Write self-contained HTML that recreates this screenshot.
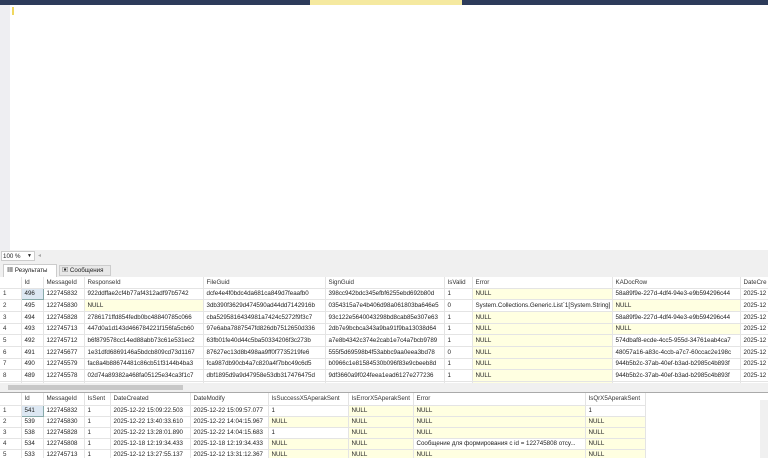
<!DOCTYPE html>
<html><head><meta charset="utf-8"><style>
*{margin:0;padding:0;box-sizing:border-box}
body{width:768px;height:458px;overflow:hidden;background:#fff;font-family:"Liberation Sans","Noto Sans CJK SC",sans-serif;font-size:6.2px;color:#222;position:relative}
.abs{position:absolute;white-space:nowrap}
table{border-collapse:collapse;table-layout:fixed;position:absolute;left:0}
td{border-right:1px solid #e4e4e4;border-bottom:1px solid #e4e4e4;white-space:nowrap;overflow:hidden;padding-left:3px;vertical-align:middle}
tr.h td{background:#fff;color:#333}
td.n{background:#fff;color:#333}
.y{background:#ffffe1}
.sel{background:#dde8f3;border:1px solid #8aa}
</style></head><body>
<div class="abs" style="left:0;top:0;width:768px;height:5px;background:#2d3b5a"></div>
<div class="abs" style="left:310px;top:0;width:152px;height:5px;background:#f5e9a0"></div>
<div class="abs" style="left:0;top:5px;width:10px;height:245px;background:#eeeef2"></div>
<div class="abs" style="left:12px;top:7px;width:2px;height:8px;background:#f0d860"></div>
<div class="abs" style="left:0;top:250px;width:768px;height:12px;background:#f0f0f0"></div>
<div class="abs" style="left:1px;top:251px;width:34px;height:10px;background:#fff;border:1px solid #ccc;line-height:9px;padding-left:1px">100 %<span style="position:absolute;right:2px;font-size:5px">▼</span></div>
<div class="abs" style="left:38px;top:251px;line-height:10px;color:#aaa">◂</div>
<div class="abs" style="left:0;top:262px;width:768px;height:15px;background:#f0f0f0"></div>
<div class="abs" style="left:3px;top:264px;width:54px;height:13px;background:#fff;border:1px solid #ccc;border-bottom:none;line-height:12px;padding-left:3px">▦ Результаты</div>
<div class="abs" style="left:59px;top:265px;width:52px;height:11px;background:#e8e8e8;border:1px solid #ccc;line-height:10px;padding-left:2px">▣ Сообщения</div>
<div class="abs" style="left:0;top:277px;width:768px;height:106px;overflow:hidden">
<table style="top:0;width:790px">
<colgroup><col style="width:21px"><col style="width:22px"><col style="width:41px"><col style="width:119px"><col style="width:122px"><col style="width:119px"><col style="width:28px"><col style="width:140px"><col style="width:128px"><col style="width:50px"></colgroup>
<tr class="h" style="height:11px"><td></td><td>Id</td><td>MessageId</td><td>ResponseId</td><td>FileGuid</td><td>SignGuid</td><td>IsValid</td><td>Error</td><td>KADocRow</td><td>DateCre</td></tr>
<tr style="height:11.7px"><td class="n">1</td><td class="sel">496</td><td>122745832</td><td>922ddffae2cf4b77af4312adf97b5742</td><td>dcfe4e4f0bdc4da681ca849d7feaafb0</td><td>398cc942bdc345efbf6255ebd692b80d</td><td>1</td><td class="y">NULL</td><td>58a89f9e-227d-4df4-94e3-e9b594296c44</td><td>2025-12</td></tr>
<tr style="height:11.7px"><td class="n">2</td><td>495</td><td>122745830</td><td class="y">NULL</td><td>3db390f3629d474590ad44dd7142916b</td><td>0354315a7e4b406d98a061803ba646e5</td><td>0</td><td>System.Collections.Generic.List`1[System.String]</td><td class="y">NULL</td><td>2025-12</td></tr>
<tr style="height:11.7px"><td class="n">3</td><td>494</td><td>122745828</td><td>2786171ffd854fedb0bc48840785c066</td><td>cba5295816434981a7424c5272f9f3c7</td><td>93c122e5640043298bd8cab85e307e63</td><td>1</td><td class="y">NULL</td><td>58a89f9e-227d-4df4-94e3-e9b594296c44</td><td>2025-12</td></tr>
<tr style="height:11.7px"><td class="n">4</td><td>493</td><td>122745713</td><td>447d0a1d143d466784221f156fa5cb60</td><td>97e6aba7887547fd826db7512650d336</td><td>2db7e9bcbca343a9ba91f9ba13038d64</td><td>1</td><td class="y">NULL</td><td class="y">NULL</td><td>2025-12</td></tr>
<tr style="height:11.7px"><td class="n">5</td><td>492</td><td>122745712</td><td>b6f879578cc14ed88abb73c61e531ec2</td><td>63fb01fe40d44c5ba50334206f3c273b</td><td>a7e8b4342c374e2cab1e7c4a7bcb9789</td><td>1</td><td class="y">NULL</td><td>574dbaf8-ecde-4cc5-955d-34761eab4ca7</td><td>2025-12</td></tr>
<tr style="height:11.7px"><td class="n">6</td><td>491</td><td>122745677</td><td>1e31dfd6869146a5bdcb809cd73d1167</td><td>87627ec13d8b498aa9ff0f7735219fe6</td><td>555f5d69598b4f53abbc9aa0eea3bd78</td><td>0</td><td class="y">NULL</td><td>48057a16-a83c-4ccb-a7c7-60ccac2e198c</td><td>2025-12</td></tr>
<tr style="height:11.7px"><td class="n">7</td><td>490</td><td>122745579</td><td>fac8a4b88674481c86cb51f3144b4ba3</td><td>fca987db90cb4a7c820a4f7bbc49c6d5</td><td>b0966c1e81584530b096f83e9cbeeb8d</td><td>1</td><td class="y">NULL</td><td>944b5b2c-37ab-40ef-b3ad-b2985c4b893f</td><td>2025-12</td></tr>
<tr style="height:11.7px"><td class="n">8</td><td>489</td><td>122745578</td><td>02d74a89382a468fa05125e34ca3f1c7</td><td>dbf1895d9a9d47958e53db317476475d</td><td>9df3660a9f024feea1ead6127e277236</td><td>1</td><td class="y">NULL</td><td>944b5b2c-37ab-40ef-b3ad-b2985c4b893f</td><td>2025-12</td></tr>
<tr style="height:11.7px"><td class="n">9</td><td>488</td><td>122745577</td><td>2420384a1f0d474fae87445405547</td><td>93caab89a1ae47a89e4479b150008d41</td><td>7f8253079f4447aaaf5734a957c1fb0c</td><td>1</td><td class="y">NULL</td><td>944b5b2c-37ab-40ef-b3ad-b2985c4b893f</td><td>2025-12</td></tr>
</table></div>
<div class="abs" style="left:0;top:383px;width:768px;height:9px;background:#f0f0f0"></div>
<div class="abs" style="left:8px;top:385px;width:175px;height:5px;background:#c8c8c8"></div>
<div class="abs" style="left:0;top:392px;width:768px;height:1px;background:#aaa"></div>
<div class="abs" style="left:0;top:393px;width:768px;height:65px;overflow:hidden">
<table style="top:0;width:645px">
<colgroup><col style="width:21px"><col style="width:22px"><col style="width:41px"><col style="width:26px"><col style="width:80px"><col style="width:78px"><col style="width:80px"><col style="width:65px"><col style="width:172px"><col style="width:60px"></colgroup>
<tr class="h" style="height:12px"><td></td><td>Id</td><td>MessageId</td><td>IsSent</td><td>DateCreated</td><td>DateModify</td><td>IsSuccessX5AperakSent</td><td>IsErrorX5AperakSent</td><td>Error</td><td>IsQrX5AperakSent</td></tr>
<tr style="height:11px"><td class="n">1</td><td class="sel">541</td><td>122745832</td><td>1</td><td>2025-12-22 15:09:22.503</td><td>2025-12-22 15:09:57.077</td><td>1</td><td class="y">NULL</td><td class="y">NULL</td><td>1</td></tr>
<tr style="height:11px"><td class="n">2</td><td>539</td><td>122745830</td><td>1</td><td>2025-12-22 13:40:33.610</td><td>2025-12-22 14:04:15.967</td><td class="y">NULL</td><td class="y">NULL</td><td class="y">NULL</td><td class="y">NULL</td></tr>
<tr style="height:11px"><td class="n">3</td><td>538</td><td>122745828</td><td>1</td><td>2025-12-22 13:28:01.890</td><td>2025-12-22 14:04:15.683</td><td>1</td><td class="y">NULL</td><td class="y">NULL</td><td class="y">NULL</td></tr>
<tr style="height:11px"><td class="n">4</td><td>534</td><td>122745808</td><td>1</td><td>2025-12-18 12:19:34.433</td><td>2025-12-18 12:19:34.433</td><td class="y">NULL</td><td class="y">NULL</td><td>Сообщение для формирования с id = 122745808 отсу...</td><td class="y">NULL</td></tr>
<tr style="height:11px"><td class="n">5</td><td>533</td><td>122745713</td><td>1</td><td>2025-12-12 13:27:55.137</td><td>2025-12-12 13:31:12.367</td><td class="y">NULL</td><td class="y">NULL</td><td class="y">NULL</td><td class="y">NULL</td></tr>
</table></div>
<div class="abs" style="left:760px;top:400px;width:8px;height:58px;background:#f0f0f0"></div>
</body></html>
